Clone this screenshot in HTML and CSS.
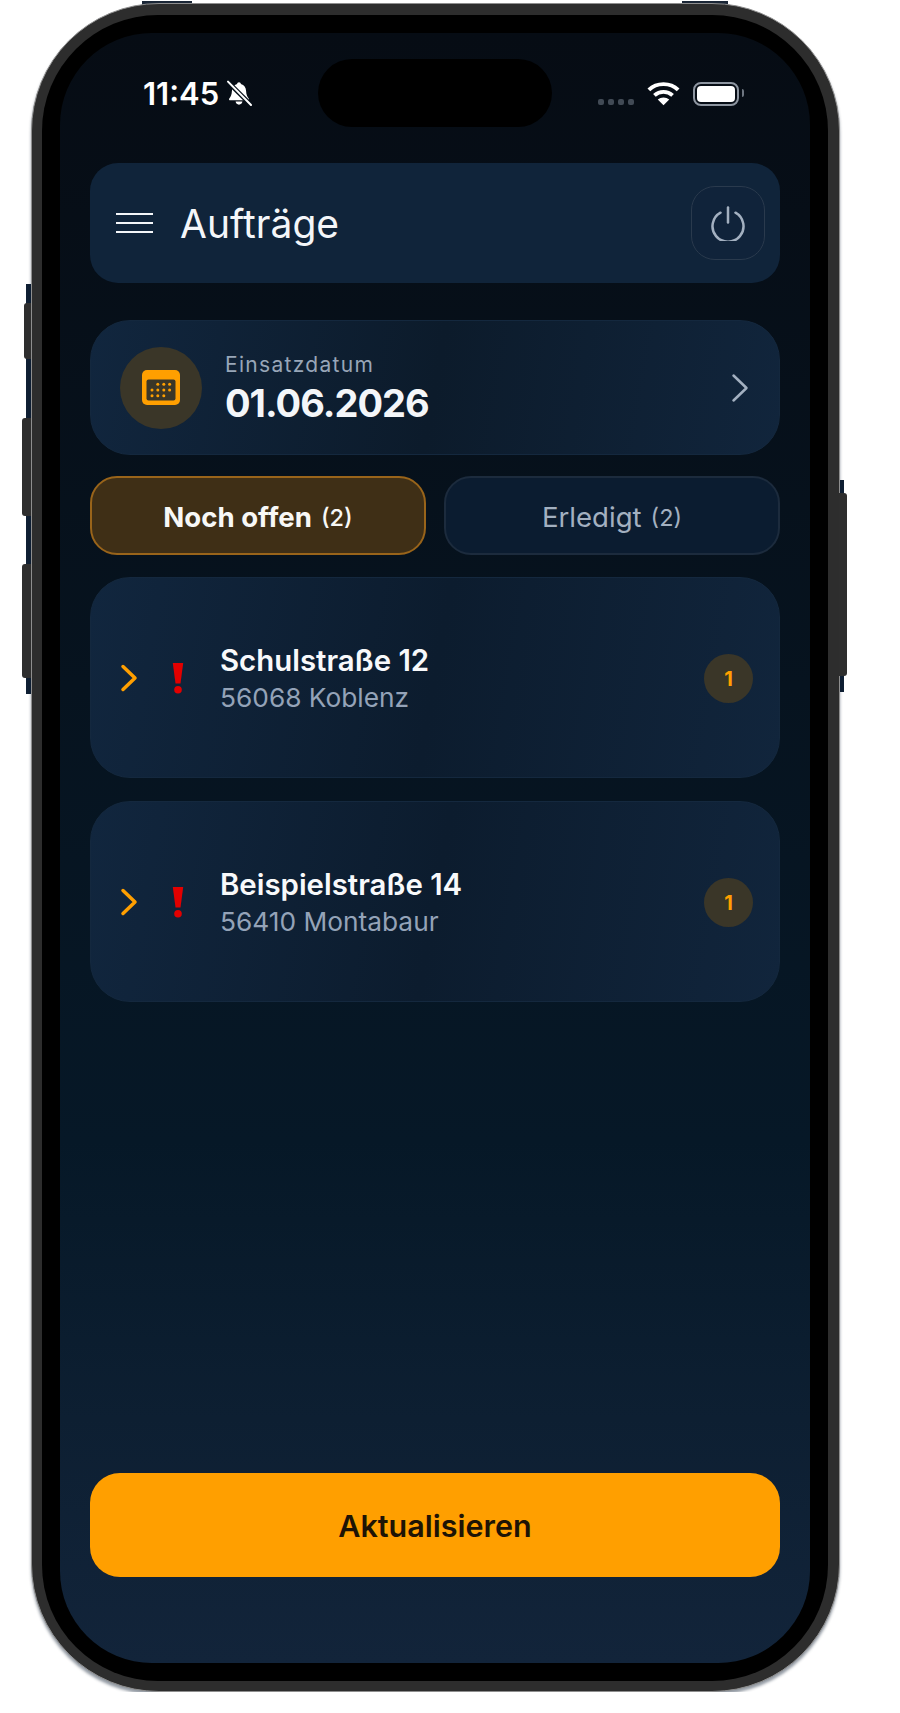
FILE: index.html
```html
<!DOCTYPE html>
<html lang="de">
<head>
    <meta charset="UTF-8">
    <meta name="viewport" content="width=device-width, initial-scale=1.0">
    <title>Aufträge</title>
    <link rel="stylesheet" href="styles.css">
</head>
<body>
    <div class="phone">
        <span class="rail rail-left"></span>
        <span class="rail rail-right"></span>
        <span class="rail rail-top-a"></span>
        <span class="rail rail-top-b"></span>
        <span class="rail rail-bottom-a"></span>
        <span class="rail rail-bottom-b"></span>
        <span class="side-btn side-mute"></span>
        <span class="side-btn side-up"></span>
        <span class="side-btn side-down"></span>
        <span class="side-btn side-power"></span>
        <div class="bezel">
            <div class="screen">
                <div class="island"></div>

                <div class="status-bar">
                    <span class="clock">11:45</span>
                    <svg class="bell" width="26" height="26" viewBox="0 0 26 26">
                        <path fill="#fff" d="M13 2.200c1.100 0 1.800.8 1.900 1.800 3.300.9 5 3.600 5.200 7 .2 3.600 1 5.600 2.600 7.400.6.7.2 1.900-.9 1.900H4.200c-1.100 0-1.500-1.200-.9-1.900 1.600-1.800 2.400-3.800 2.600-7.400.2-3.400 1.900-6.100 5.200-7 .1-1 .8-1.800 1.900-1.800z"/>
                        <path fill="#fff" d="M9.600 21.600h6.800c-.2 1.800-1.600 3.100-3.400 3.100s-3.200-1.300-3.400-3.100z"/>
                        <path stroke="#071019" stroke-width="4.500" d="M1 1l24 24"/>
                        <path stroke="#fff" stroke-width="2" stroke-linecap="round" d="M2 1.600l23 23.400"/>
                    </svg>
                    <div class="status-right">
                        <div class="signal"><i></i><i></i><i></i><i></i></div>
                        <svg class="wifi" width="33" height="25" viewBox="0 0 32 24">
                            <path fill="none" stroke="#fff" stroke-width="3.800" d="M1.800 8.500C9.500 1 22.500 1 30.200 8.500"/>
                            <path fill="none" stroke="#fff" stroke-width="3.800" d="M7.200 13.800c5-4.500 12.600-4.500 17.600 0"/>
                            <path fill="#fff" d="M16 23.500l-5.600-5.700c3.200-2.700 8-2.700 11.200 0z"/>
                        </svg>
                        <div class="battery"><div class="battery-level"></div></div>
                    </div>
                </div>

                <div class="top-card">
                    <div class="menu-icon"><i></i><i></i><i></i></div>
                    <h1>Aufträge</h1>
                    <div class="power-btn">
                        <svg width="36" height="36" viewBox="0 0 36 36" fill="none" stroke="#a3b0c0" stroke-width="2.500" stroke-linecap="round">
                            <path d="M18 2.500v15"/>
                            <path d="M10.500 7.700a15.500 15.500 0 1 0 15 0"/>
                        </svg>
                    </div>
                </div>

                <div class="date-card">
                    <div class="date-icon">
                        <svg width="38" height="35" viewBox="0 0 38 35">
                            <rect width="38" height="35" rx="5" fill="#ff9f00"/>
                            <rect x="4.500" y="9.500" width="29" height="21" rx="2" fill="#3a3628"/>
                            <g fill="#ff9f00">
                                <circle cx="15.800" cy="14.300" r="1.500"/>
                                <circle cx="21.800" cy="14.300" r="1.500"/>
                                <circle cx="27.600" cy="14.300" r="1.500"/>
                                <circle cx="10" cy="20" r="1.500"/>
                                <circle cx="15.800" cy="20" r="1.500"/>
                                <circle cx="21.800" cy="20" r="1.500"/>
                                <circle cx="27.600" cy="20" r="1.500"/>
                                <circle cx="10" cy="25.800" r="1.500"/>
                                <circle cx="15.800" cy="25.800" r="1.500"/>
                                <circle cx="21.800" cy="25.800" r="1.500"/>
                            </g>
                        </svg>
                    </div>
                    <div class="date-text">
                        <div class="date-label">Einsatzdatum</div>
                        <div class="date-value">01.06.2026</div>
                    </div>
                    <svg class="date-arrow" width="18" height="30" viewBox="0 0 18 30" fill="none" stroke="#a3b0c0" stroke-width="2.500" stroke-linecap="round" stroke-linejoin="round">
                        <path d="M2.500 2.500L15.500 15 2.500 27.500"/>
                    </svg>
                </div>

                <div class="tabs">
                    <div class="tab tab-active">Noch offen <small>(2)</small></div>
                    <div class="tab">Erledigt <small>(2)</small></div>
                </div>

                <div class="job-card">
                    <svg class="job-arrow" width="18" height="28" viewBox="0 0 18 28" fill="none" stroke="#ff9f00" stroke-width="3.500" stroke-linecap="round" stroke-linejoin="round">
                        <path d="M3 2.500L15 14 3 25.500"/>
                    </svg>
                    <svg class="job-alert" width="12" height="32" viewBox="0 0 12 32">
                        <path fill="#e30000" d="M.800 1h10.400L8.500 21.500h-5z"/>
                        <circle cx="6" cy="27.800" r="3.800" fill="#e30000"/>
                    </svg>
                    <div class="job-text">
                        <div class="job-street">Schulstraße 12</div>
                        <div class="job-city">56068 Koblenz</div>
                    </div>
                    <div class="job-badge">1</div>
                </div>

                <div class="job-card">
                    <svg class="job-arrow" width="18" height="28" viewBox="0 0 18 28" fill="none" stroke="#ff9f00" stroke-width="3.500" stroke-linecap="round" stroke-linejoin="round">
                        <path d="M3 2.500L15 14 3 25.500"/>
                    </svg>
                    <svg class="job-alert" width="12" height="32" viewBox="0 0 12 32">
                        <path fill="#e30000" d="M.800 1h10.400L8.500 21.500h-5z"/>
                        <circle cx="6" cy="27.800" r="3.800" fill="#e30000"/>
                    </svg>
                    <div class="job-text">
                        <div class="job-street">Beispielstraße 14</div>
                        <div class="job-city">56410 Montabaur</div>
                    </div>
                    <div class="job-badge">1</div>
                </div>

                <button class="refresh-btn">Aktualisieren</button>
            </div>
        </div>
    </div>
</body>
</html>
```

FILE: styles.css
```css
body {
    margin: 0;
    background-color: #fff;
    font-family: Inter, "Noto Sans", sans-serif;
    color: #f4f6f9;
}
.phone {
    position: relative;
    box-sizing: border-box;
    width: 809px;
    height: 1689px;
    margin: 3px 0 0 31px;
    padding: 11px 11px 10px 10px;
    background-color: #2d2d2d;
    border: 1px solid #8e8e8e;
    border-radius: 128px;
    box-shadow: 0 3px 3px rgba(15, 30, 50, 0.45);
}
/* dark metal showing around the body of the frame */
.rail {
    position: absolute;
    z-index: -1;
    background-color: #0f1f33;
}
.rail-left {
    left: -6px;
    top: 280px;
    width: 8px;
    height: 410px;
}
.rail-right {
    right: -5px;
    top: 476px;
    width: 8px;
    height: 212px;
}
.rail-top-a {
    left: 110px;
    top: -3px;
    width: 50px;
    height: 6px;
    background-color: #1a2636;
}
.rail-top-b {
    left: 650px;
    top: -3px;
    width: 46px;
    height: 6px;
    background-color: #1a2636;
}
.rail-bottom-a {
    left: 212px;
    bottom: -14px;
    width: 32px;
    height: 18px;
}
.rail-bottom-b {
    left: 462px;
    bottom: -14px;
    width: 24px;
    height: 18px;
}
.side-btn {
    position: absolute;
    background-color: #2e2e2e;
    border-radius: 3px 0 0 3px;
}
.side-mute {
    left: -8px;
    top: 299px;
    width: 7px;
    height: 56px;
}
.side-up {
    left: -10px;
    top: 414px;
    width: 9px;
    height: 98px;
}
.side-down {
    left: -10px;
    top: 560px;
    width: 9px;
    height: 114px;
}
.side-power {
    left: 807px;
    top: 489px;
    width: 8px;
    height: 183px;
    border-radius: 0 3px 3px 0;
}
.bezel {
    box-sizing: border-box;
    height: 100%;
    padding: 18px;
    background-color: #000;
    border-radius: 116px;
}
.screen {
    position: relative;
    box-sizing: border-box;
    display: flex;
    flex-direction: column;
    height: 100%;
    padding: 0 30px 86px;
    overflow: hidden;
    border-radius: 92px;
    background: linear-gradient(180deg, #060c14 0%, #06131f 40%, #061827 68%, #0d1f32 85%, #12243a 100%);
}
.island {
    position: absolute;
    left: 258px;
    top: 26px;
    width: 234px;
    height: 68px;
    background-color: #000;
    border-radius: 34px;
}
.status-bar {
    display: flex;
    align-items: flex-start;
    flex: none;
    height: 130px;
    padding: 44px 39px 0 53px;
    box-sizing: border-box;
}
.clock {
    font-size: 31px;
    font-weight: 600;
    line-height: 34px;
    color: #fff;
}
.bell {
    margin: 3px 0 0 7px;
}
.status-right {
    display: flex;
    align-items: flex-start;
    margin-left: auto;
}
.signal {
    display: flex;
    gap: 4px;
    margin: 22px 13px 0 0;
}
.signal i {
    width: 6px;
    height: 6px;
    border-radius: 2px;
    background-color: #414a55;
}
.wifi {
    margin: 4px 13px 0 0;
}
.battery {
    position: relative;
    box-sizing: border-box;
    width: 46px;
    height: 24px;
    margin: 5px 2px 0 0;
    padding: 2px;
    border: 2px solid #8d95a0;
    border-radius: 8px;
}
.battery::after {
    content: "";
    position: absolute;
    right: -7px;
    top: 5px;
    width: 2px;
    height: 8px;
    border-radius: 0 2px 2px 0;
    background-color: #6e7681;
}
.battery-level {
    height: 100%;
    background-color: #fff;
    border-radius: 4px;
}
.top-card {
    display: flex;
    align-items: center;
    flex: none;
    box-sizing: border-box;
    height: 120px;
    margin-bottom: 37px;
    padding: 0 15px 0 26px;
    background-color: #10243a;
    border-radius: 28px;
}
.menu-icon {
    display: flex;
    flex-direction: column;
    gap: 6.5px;
    width: 37px;
    margin-right: 27px;
}
.menu-icon i {
    height: 2.500px;
    background-color: #f4f6f9;
}
h1 {
    margin: 0;
    font-size: 39px;
    font-weight: 400;
    color: #f4f6f9;
}
.power-btn {
    display: flex;
    align-items: center;
    justify-content: center;
    box-sizing: border-box;
    width: 74px;
    height: 74px;
    margin-left: auto;
    border: 1px solid #2a3a4d;
    border-radius: 24px;
    background-color: #10233a;
}
.date-card {
    display: flex;
    align-items: center;
    flex: none;
    box-sizing: border-box;
    height: 135px;
    margin-bottom: 21px;
    padding: 0 30px 0 29px;
    border: 1px solid #14283e;
    border-radius: 40px;
    background: linear-gradient(100deg, #11263e 0%, #0c1b2b 50%, #11253c 100%);
}
.date-icon {
    display: flex;
    align-items: center;
    justify-content: center;
    width: 82px;
    height: 82px;
    margin-right: 23px;
    border-radius: 50%;
    background-color: #3a3628;
}
.date-text {
    padding-top: 3px;
}
.date-label {
    font-size: 21px;
    line-height: 26px;
    letter-spacing: 1.3px;
    color: #98a6b8;
}
.date-value {
    margin-top: 2px;
    font-size: 38px;
    font-weight: 700;
    line-height: 46px;
    letter-spacing: -1px;
    color: #f4f6f9;
}
.date-arrow {
    margin-left: auto;
}
.tabs {
    display: flex;
    flex: none;
    gap: 18px;
    height: 79px;
    margin-bottom: 22px;
}
.tab {
    display: flex;
    align-items: center;
    justify-content: center;
    flex: 1;
    gap: 9px;
    box-sizing: border-box;
    padding-top: 2px;
    border: 2px solid #1c2b3d;
    border-radius: 27px;
    background-color: #0b1c30;
    font-size: 27.6px;
    color: #a3b0c0;
}
.tab small {
    margin-top: 2px;
    font-size: 23.5px;
}
.tab-active {
    border-color: #99641a;
    background-color: #3f2f16;
    font-weight: 700;
    color: #f8f8f6;
}
.tab-active small {
    font-weight: 500;
}
.job-card {
    display: flex;
    align-items: center;
    flex: none;
    box-sizing: border-box;
    height: 201px;
    margin-bottom: 23px;
    padding: 0 26px 0 29px;
    border: 1px solid #14283e;
    border-radius: 40px;
    background: linear-gradient(100deg, #11263e 0%, #0c1c2e 50%, #11253c 100%);
}
.job-alert {
    margin: 0 36px 0 34px;
}
.job-text {
    padding-top: 4px;
}
.job-street {
    font-size: 29.4px;
    font-weight: 600;
    line-height: 36px;
    color: #f8f9fb;
}
.job-city {
    font-size: 26.3px;
    line-height: 37px;
    color: #94a3b8;
}
.job-badge {
    display: flex;
    align-items: center;
    justify-content: center;
    width: 49px;
    height: 49px;
    margin: 2px 0 0 auto;
    border-radius: 50%;
    background-color: #3a3628;
    font-size: 20px;
    font-weight: 700;
    color: #ff9f00;
}
.refresh-btn {
    flex: none;
    height: 104px;
    margin-top: auto;
    border: none;
    border-radius: 30px;
    background-color: #ff9f00;
    font-family: inherit;
    font-size: 30.5px;
    font-weight: 600;
    color: #1e1405;
}
```
